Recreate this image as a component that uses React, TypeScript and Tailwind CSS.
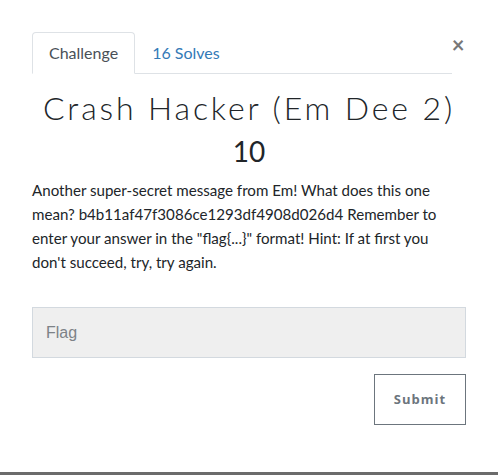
const description =
  'Another super-secret message from Em! What does this one mean? b4b11af47f3086ce1293df4908d026d4 Remember to enter your answer in the "flag{...}" format! Hint: If at first you don\'t succeed, try, try again.';

export default function App() {
  return (
    <div className="flex h-[475px] flex-col bg-white font-['Lato',sans-serif] text-[#212529]">
      <div className="flex-1 px-8 pt-8">
        {/* Tabs */}
        <div className="flex items-start">
          <ul className="flex h-[42px] w-[420px] shrink-0 border-b border-[#dee2e6]">
            <li className="-mb-px flex h-[42px] items-center rounded-t border border-b-white border-[#dee2e6] bg-white px-4 text-[16px] text-[#495057]">
              Challenge
            </li>
            <li className="flex h-[41px] items-center px-[17px] text-[16px] text-[#337ab7]">
              16 Solves
            </li>
          </ul>
          <button className="mt-[1px] flex h-6 w-3 items-center justify-center text-[22px] font-bold leading-none text-[#777]">
            ×
          </button>
        </div>

        {/* Title */}
        <h3 className="mt-[14px] text-center text-[32px] font-light leading-[40px] tracking-[0.09em] text-[#212529]">
          Crash Hacker (Em Dee 2)
        </h3>
        <h4 className="mt-[6px] text-center text-[28px] leading-[34px]">10</h4>

        {/* Description */}
        <p className="mt-[10px] text-[15.12px] leading-[24px]">{description}</p>

        {/* Flag input */}
        <input
          placeholder="Flag"
          className="mt-[33px] h-[51px] w-full border border-[#d3d9df] bg-[#efefef] px-[13px] font-['Liberation_Sans',sans-serif] text-[16px] text-[#495057] outline-none placeholder:text-[#7d8287]"
        />

        <div className="mt-[16px] flex justify-end">
          <button className="h-[51px] w-[92px] border border-[#6c757d] bg-white font-['Open_Sans',sans-serif] text-[13px] font-bold tracking-[0.08em] text-[#6c757d]">
            Submit
          </button>
        </div>
      </div>
      <div className="h-[3px] bg-[#6b6b6b]" />
    </div>
  );
}
